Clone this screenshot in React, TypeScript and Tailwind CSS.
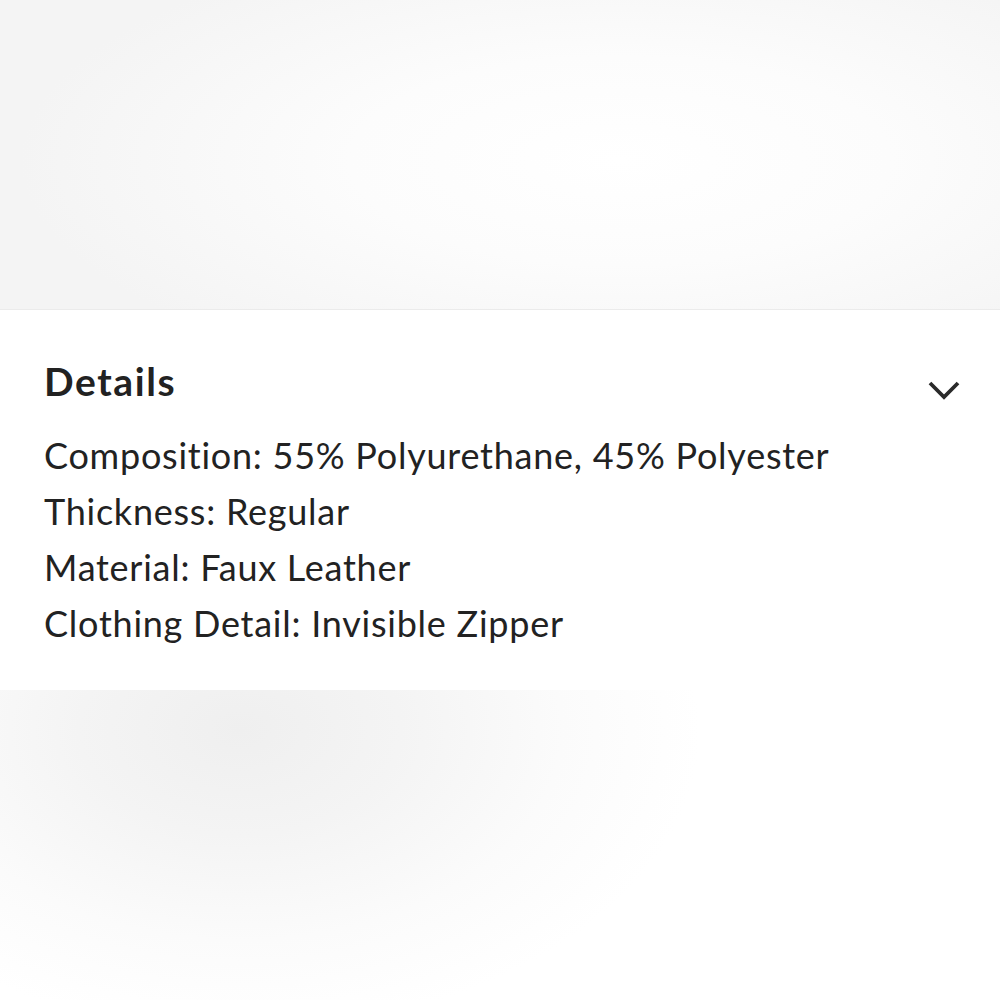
import React from "react";

const lines = [
  "Composition: 55% Polyurethane, 45% Polyester",
  "Thickness: Regular",
  "Material: Faux Leather",
  "Clothing Detail: Invisible Zipper",
];

export default function App() {
  return (
    <div className="w-[1000px] h-[1000px] flex flex-col bg-white font-['Lato','Noto_Sans',sans-serif] text-[#222222] [font-variant-ligatures:none]">
      <div className="h-[310px] shrink-0 border-b border-[#ebebeb] bg-[radial-gradient(ellipse_60%_75%_at_62%_52%,#ffffff_0%,#fcfcfc_45%,#f4f4f4_100%)]" />
      <section className="shrink-0 bg-white pl-[44px] pr-[40px] pt-[49px] pb-[39px]">
        <div className="flex items-center justify-between">
          <h2 className="text-[39px] leading-[44px] font-bold tracking-[1.6px]">Details</h2>
          <svg width="32" height="20" viewBox="0 0 32 20" className="mt-[18px]" fill="none">
            <path d="M2 3 L16 17 L30 3" stroke="#2a2a2a" strokeWidth="3.8" strokeLinecap="butt" strokeLinejoin="miter" />
          </svg>
        </div>
        <div className="mt-[24px] flex flex-col">
          {lines.map((l) => (
            <p key={l} className="text-[36px] leading-[56px] tracking-[0.75px]">{l}</p>
          ))}
        </div>
      </section>
      <div className="flex-1 bg-[radial-gradient(ellipse_460px_300px_at_240px_40px,#efefef_0%,#f4f4f4_35%,#fbfbfb_70%,#ffffff_100%)]" />
    </div>
  );
}
